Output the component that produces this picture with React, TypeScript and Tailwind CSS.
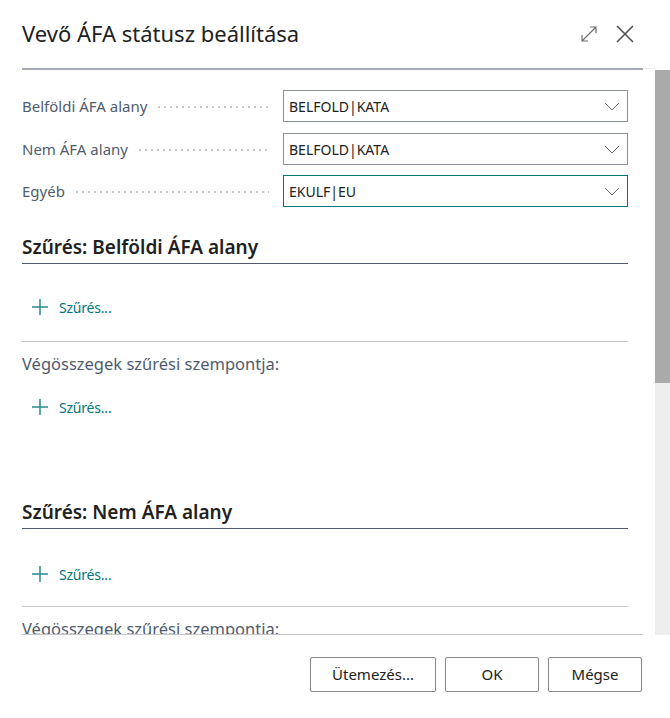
const font = { fontFamily: '"Noto Sans", "Open Sans", Arial, sans-serif' };

function Chevron() {
  return (
    <svg width="16" height="9" viewBox="0 0 16 9" fill="none" className="shrink-0">
      <path d="M1 1l7 7 7-7" stroke="#6b6b6b" strokeWidth="1" />
    </svg>
  );
}

function FieldRow({ label, value, focused }: { label: string; value: string; focused?: boolean }) {
  return (
    <div className="flex h-[32px] items-center">
      <div className="flex w-[261px] items-center">
        <span className="whitespace-nowrap text-[15px] text-[#505c6d]">{label}</span>
        <span className="mr-[14px] ml-[9px] mt-[2px] h-[4px] flex-1 bg-[radial-gradient(circle,#c3c8ce_0.9px,transparent_1.1px)] bg-[length:6px_4px]" />
      </div>
      <div
        className={
          focused
            ? "flex h-full flex-1 items-center justify-between border border-[#00787a] pl-[5px] pr-[7px]"
            : "flex h-full flex-1 items-center justify-between border border-[#8a9099] pl-[5px] pr-[7px]"
        }
      >
        <span className="text-[14px] text-[#212121]">{value}</span>
        <Chevron />
      </div>
    </div>
  );
}

function AddFilter() {
  return (
    <div className="flex h-[32px] items-center pl-[10px]">
      <svg width="16" height="16" viewBox="0 0 16 16" className="shrink-0">
        <path d="M8 0v16M0 8h16" stroke="#2a8c8c" strokeWidth="1.5" />
      </svg>
      <span className="ml-[11px] text-[14px] tracking-[-0.2px] text-[#00787a]">Szűrés...</span>
    </div>
  );
}

function SectionHeading({ title }: { title: string }) {
  return (
    <div className="border-b border-[#505c6d] pb-[4px]">
      <h2 className="text-[19px] leading-[24px] font-semibold text-[#212121]">{title}</h2>
    </div>
  );
}

export default function App() {
  return (
    <div className="flex h-[718px] w-[670px] flex-col overflow-hidden bg-white" style={font}>
      {/* dialog header */}
      <div className="flex h-[68px] shrink-0 items-center justify-between pl-[22px] pr-[36px]">
        <h1 className="mb-[2px] text-[22px] text-[#212121]">Vevő ÁFA státusz beállítása</h1>
        <div className="flex items-center gap-[18px]">
          <svg width="18" height="18" viewBox="0 0 18 18" fill="none">
            <path d="M2 16L16 2M10 2h6v6M2 10v6h6" stroke="#707070" strokeWidth="1.2" />
          </svg>
          <svg width="18" height="18" viewBox="0 0 18 18" fill="none">
            <path d="M1 1l16 16M17 1L1 17" stroke="#505050" strokeWidth="1.6" />
          </svg>
        </div>
      </div>

      {/* scrollable content */}
      <div className="flex h-[567px] shrink-0">
        <div className="ml-[22px] flex w-[621px] flex-col border-t-2 border-b border-t-[#a5aab3] border-b-[#c8c8c8]">
          <div className="w-[606px] flex-1 overflow-hidden pt-[20px]">
            <FieldRow label="Belföldi ÁFA alany" value="BELFOLD|KATA" />
            <div className="mt-[11px]">
              <FieldRow label="Nem ÁFA alany" value="BELFOLD|KATA" />
            </div>
            <div className="mt-[10px]">
              <FieldRow label="Egyéb" value="EKULF|EU" focused />
            </div>

            <div className="mt-[28px]">
              <SectionHeading title="Szűrés: Belföldi ÁFA alany" />
            </div>
            <div className="mt-[27px]">
              <AddFilter />
            </div>
            <div className="mt-[18px] border-t border-[#c8c8c8]" />
            <p className="mt-[11px] text-[16.5px] leading-[22px] text-[#505c6d]">Végösszegek szűrési szempontja:</p>
            <div className="mt-[16px]">
              <AddFilter />
            </div>

            <div className="mt-[77px]">
              <SectionHeading title="Szűrés: Nem ÁFA alany" />
            </div>
            <div className="mt-[29px]">
              <AddFilter />
            </div>
            <div className="mt-[16px] border-t border-[#c8c8c8]" />
            <p className="mt-[11px] text-[16.5px] leading-[22px] text-[#505c6d]">Végösszegek szűrési szempontja:</p>
          </div>
        </div>
        <div className="flex-1 border-t border-[#f3f3f3]" />
        <div className="mt-[2px] flex h-[565px] w-[15px] flex-col bg-[#eeeeee]">
          <div className="h-[313px] bg-[#aaaaaa]" />
        </div>
      </div>

      {/* footer buttons */}
      <div className="flex justify-end gap-[9px] pr-[28px] pt-[22px]">
        <button className="h-[35px] w-[126px] rounded-[2px] border border-[#8a8886] text-[15px] text-[#212121]">
          Ütemezés...
        </button>
        <button className="h-[35px] w-[94px] rounded-[2px] border border-[#8a8886] text-[15px] text-[#212121]">
          OK
        </button>
        <button className="h-[35px] w-[94px] rounded-[2px] border border-[#8a8886] text-[15px] text-[#212121]">
          Mégse
        </button>
      </div>
    </div>
  );
}
